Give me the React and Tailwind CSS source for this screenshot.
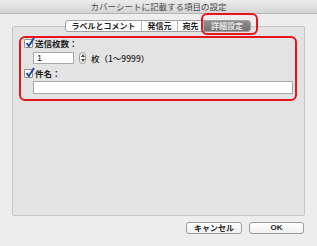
const font = { fontFamily: '"Noto Sans CJK JP", "Liberation Sans", sans-serif' };

function Check() {
  return (
    <span className="relative w-[9px] h-[9px] bg-white border border-[#8f8f8f] rounded-[1px] shrink-0">
      <svg width="10" height="11" viewBox="0 0 10 11" className="absolute -top-[3px] left-0">
        <path d="M1.5 6 L3.8 9 L9 1" fill="none" stroke="#1c4d9e" strokeWidth="2" />
      </svg>
    </span>
  );
}

function Spinner() {
  return (
    <span className="w-[7px] h-[12px] rounded-full border border-[#9a9a9a] bg-[#f7f7f7] flex flex-col items-center justify-center gap-[2px]">
      <svg width="4" height="3" viewBox="0 0 4 3"><path d="M0 3 L2 0 L4 3 Z" fill="#444" /></svg>
      <svg width="4" height="3" viewBox="0 0 4 3"><path d="M0 0 L2 3 L4 0 Z" fill="#444" /></svg>
    </span>
  );
}

export default function App() {
  const tabs = ["ラベルとコメント", "発信元", "宛先"];
  return (
    <div className="w-[317px] h-[246px] bg-[#ededed] flex flex-col text-[#222]" style={font}>
      <div className="h-[14px] border-b border-[#b5b5b5] bg-gradient-to-b from-[#ececec] to-[#d4d4d4] flex items-center justify-center text-[8.5px] text-[#4a4a4a] leading-none">
        カバーシートに記載する項目の設定
      </div>

      <div className="px-[12px] pt-[6px]">
        <div className="relative z-10 flex ml-[53px] w-[186px] h-[12px] bg-white border border-[#a0a0a0] rounded-[3px] text-[8px] leading-none font-bold">
          {tabs.map((t, i) => (
            <div
              key={t}
              className={
                "flex items-center justify-center border-r border-[#b5b5b5] " +
                (i === 0 ? "w-[76px]" : i === 1 ? "w-[36px]" : "w-[26px]")
              }
            >
              {t}
            </div>
          ))}
          <div className="relative flex-1 flex items-center justify-center bg-gradient-to-b from-[#8d8d8d] to-[#727272] text-[#f4f4f4] font-medium rounded-r-[2px]">
            詳細設定
            <span className="absolute -left-[3px] -right-[8px] -top-[8px] -bottom-[4px] border-2 border-[#e8141c] rounded-[6px]" />
          </div>
        </div>

        <div className="-mt-[6px] h-[190px] bg-[#e3e3e3] border border-[#c6c6c6] rounded-[2px] pt-[9px] pl-[6px]">
          <div className="w-[278px] h-[65px] border-2 border-[#e8141c] rounded-[6px] pl-[3px] flex flex-col text-[8.5px] leading-none font-bold">
            <div className="flex items-center gap-[2px] h-[10px]">
              <Check />
              <span>送信枚数：</span>
            </div>
            <div className="flex items-center mt-[4px] ml-[9px] h-[12px]">
              <div className="w-[41px] h-[12px] bg-white border border-[#a8a8a8] flex items-center pl-[3px] text-[9px] font-normal" style={{ fontFamily: '"Liberation Sans", sans-serif' }}>
                1
              </div>
              <span className="ml-[5px]"><Spinner /></span>
              <span className="ml-[5px] font-medium">枚（1～9999）</span>
            </div>
            <div className="flex items-center gap-[2px] h-[10px] mt-[4px]">
              <Check />
              <span>件名：</span>
            </div>
            <div className="ml-[9px] mt-[3px] w-[260px] h-[13px] bg-white border border-[#a8a8a8]" />
          </div>
        </div>
      </div>

      <div className="flex justify-end gap-[7px] pr-[13px] mt-[6px] text-[8px] leading-none font-bold">
        <button className="w-[56px] h-[12px] bg-gradient-to-b from-white to-[#f0f0f0] border border-[#9a9a9a] rounded-[3px] flex items-center justify-center">
          キャンセル
        </button>
        <button className="w-[55px] h-[12px] bg-gradient-to-b from-white to-[#f0f0f0] border border-[#9a9a9a] rounded-[3px] flex items-center justify-center" style={{ fontFamily: '"Liberation Sans", sans-serif' }}>
          OK
        </button>
      </div>
    </div>
  );
}
